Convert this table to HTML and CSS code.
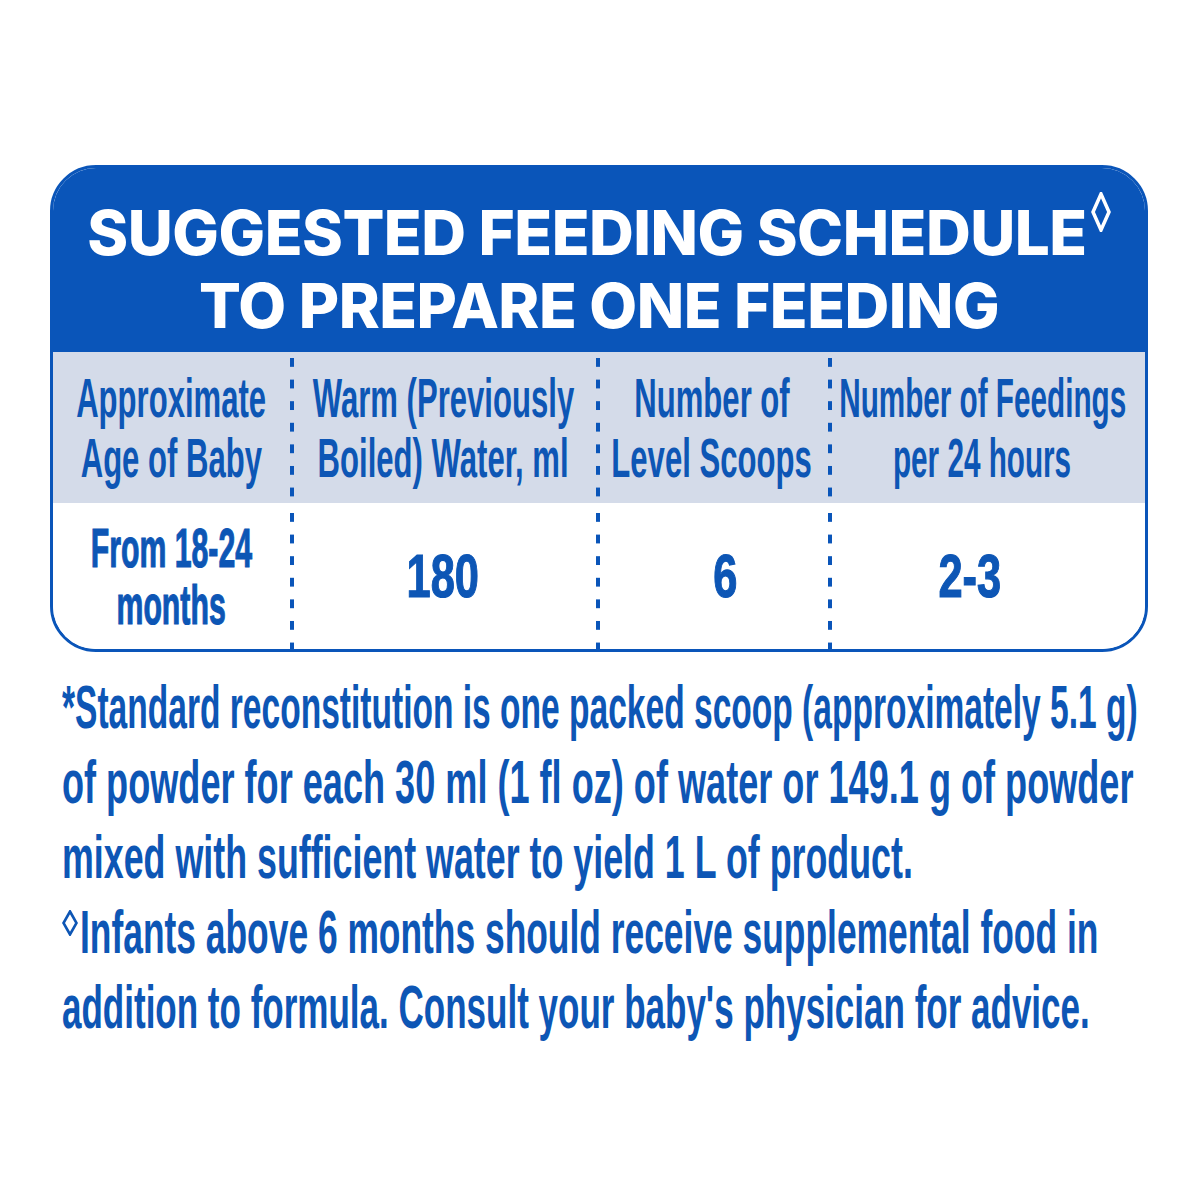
FILE: index.html
```html
<!DOCTYPE html>
<html lang="en">
<head>
<meta charset="utf-8">
<title>Suggested Feeding Schedule</title>
<link rel="stylesheet" href="styles.css">
</head>
<body>
<div class="card">
  <div class="title">
    <div class="tline">SUGGESTED FEEDING SCHEDULE<svg class="dia" viewBox="0 0 20 40" width="20" height="40"><polygon points="10,2 18,20 10,38 2,20" fill="none" stroke="#fff" stroke-width="3.5" stroke-linejoin="miter"/></svg></div>
    <div class="tline">TO PREPARE ONE FEEDING</div>
  </div>
  <div class="grid">
    <div class="th"><span class="hx">Approximate</span><span class="hx">Age of Baby</span></div>
    <div class="th dl"><span class="hx">Warm (Previously</span><span class="hx">Boiled) Water, ml</span></div>
    <div class="th dl"><span class="hx">Number of</span><span class="hx">Level Scoops</span></div>
    <div class="th dl h4"><span class="hx">Number of Feedings</span><span class="hx">per 24 hours</span></div>
    <div class="td"><span class="dx">From 18-24</span><span class="dx">months</span></div>
    <div class="td dl"><span class="vx">180</span></div>
    <div class="td dl shift-r"><span class="vx">6</span></div>
    <div class="td dl shift-l"><span class="vx">2-3</span></div>
  </div>
</div>
<div class="notes">
  <div class="nl l1"><span>*Standard reconstitution is one packed scoop (approximately 5.1 g)</span></div>
  <div class="nl l2"><span>of powder for each 30 ml (1 fl oz) of water or 149.1 g of powder</span></div>
  <div class="nl l3"><span>mixed with sufficient water to yield 1 L of product.</span></div>
  <div class="nl l4"><svg class="sdia" viewBox="0 0 16 26" width="16" height="26"><polygon points="8,1.5 14.5,13 8,24.5 1.5,13" fill="none" stroke="#0d56b5" stroke-width="2.6"/></svg><span>Infants above 6 months should receive supplemental food in</span></div>
  <div class="nl l5"><span>addition to formula. Consult your baby's physician for advice.</span></div>
</div>
</body>
</html>
```
FILE: styles.css
```css
body {
  margin: 0;
  background: #ffffff;
  font-family: "Liberation Sans", Arial, sans-serif;
  color: #0d56b5;
}

.card {
  margin: 165px 52px 0 50px;
  border: 3px solid #0a55b9;
  border-radius: 46px;
  overflow: hidden;
}

.title {
  background: #0a55b9;
  color: #ffffff;
  font-family: Inter, "Open Sans", sans-serif;
  font-weight: 800;
  font-size: 62px;
  line-height: 73px;
  letter-spacing: -0.5px;
  text-align: center;
  padding: 28px 0 10px;
}

.tline {
  white-space: nowrap;
}

.dia {
  display: inline-block;
  vertical-align: top;
  margin-left: 4px;
  margin-top: -4px;
}

.grid {
  display: grid;
  grid-template-columns: 237px 306px 232px minmax(0, 1fr);
}

.th,
.td {
  min-width: 0;
  display: flex;
  flex-direction: column;
  align-items: center;
  justify-content: center;
  font-weight: 700;
}

.th {
  background-color: #d4dbe9;
  height: 151px;
  font-size: 56px;
  line-height: 60px;
}

.td {
  height: 146px;
  background-color: #ffffff;
}

.dl {
  background-image: linear-gradient(to bottom, #0a55b9 0, #0a55b9 9px, transparent 9px);
  background-size: 4px 21.6px;
  background-repeat: repeat-y;
  background-position: 0 6px;
}

.td.dl {
  background-position: 0 10px;
}

.shift-r {
  padding-left: 26px;
}

.shift-l {
  padding-right: 34px;
}

.hx,
.dx,
.vx {
  display: block;
  white-space: nowrap;
}

.hx {
  transform: scaleX(0.555);
}

.h4 {
  padding-right: 8px;
}

.h4 .hx {
  transform: scaleX(0.53);
}

.dx {
  font-size: 56px;
  line-height: 57px;
  transform: scaleX(0.54);
  -webkit-text-stroke: 1.2px currentColor;
}

.vx {
  font-size: 62px;
  line-height: 62px;
  transform: scaleX(0.7);
  -webkit-text-stroke: 1.2px currentColor;
}

.notes {
  padding: 18px 0 0 62px;
  font-size: 61px;
  line-height: 75px;
  font-weight: 700;
  overflow: hidden;
}

.nl {
  display: flex;
  align-items: flex-start;
  height: 75px;
  white-space: nowrap;
}

.nl span {
  display: block;
  transform-origin: 0 0;
}

.l1 span { transform: scaleX(0.55); }
.l2 span { transform: scaleX(0.592); }
.l3 span { transform: scaleX(0.587); }
.l4 span { transform: scaleX(0.58); }
.l5 span { transform: scaleX(0.574); }

.sdia {
  flex: none;
  margin: 15px 2px 0 0;
}
```
